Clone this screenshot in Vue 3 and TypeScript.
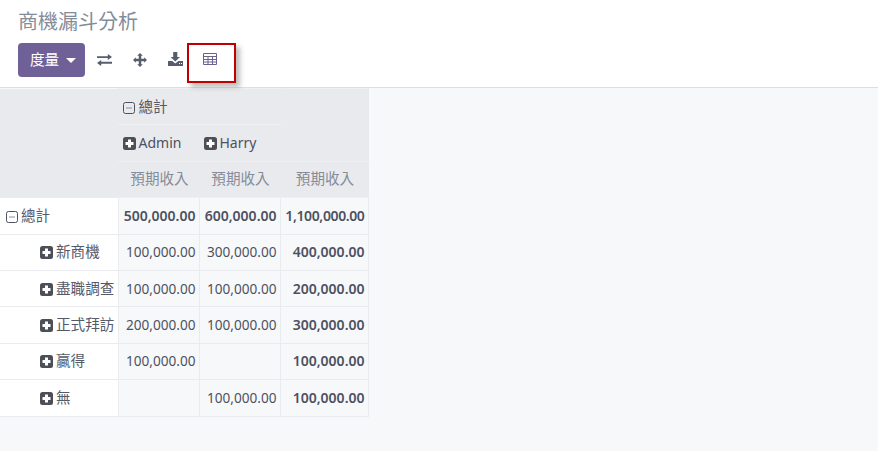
<script setup lang="ts">
interface Row { label: string; a: string; b: string; total: string }
const rows: Row[] = [
  { label: '新商機', a: '100,000.00', b: '300,000.00', total: '400,000.00' },
  { label: '盡職調查', a: '100,000.00', b: '100,000.00', total: '200,000.00' },
  { label: '正式拜訪', a: '200,000.00', b: '100,000.00', total: '300,000.00' },
  { label: '贏得', a: '100,000.00', b: '', total: '100,000.00' },
  { label: '無', a: '', b: '100,000.00', total: '100,000.00' },
]
</script>

<template>
  <div class="page">
    <header class="head">
      <h1 class="title">商機漏斗分析</h1>
      <div class="tools">
        <button class="measure">度量<span class="caret"></span></button>
        <button class="tool nudge" aria-label="flip">
          <svg width="15" height="12" viewBox="0 0 15 12"><path d="M0 2.2h10.8V0L15 3l-4.2 3V4H0zM15 7.8v1.9H4.2V12L0 9l4.2-3v1.8z" fill="#565d6e"/></svg>
        </button>
        <button class="tool nudge" aria-label="expand">
          <svg width="14" height="14" viewBox="0 0 14 14"><path d="M7 0l2.8 2.8H8.2V5.8h3V4.2L14 7l-2.8 2.8V8.2h-3v3h1.6L7 14l-2.8-2.8h1.6v-3h-3v1.6L0 7l2.8-2.8v1.6h3v-3H4.2z" fill="#565d6e"/></svg>
        </button>
        <button class="tool tool-up" aria-label="download">
          <svg width="15" height="14" viewBox="0 0 15 14"><path d="M5.2 0h4.1v5H12L7.3 9.6 2.6 5h2.6zM0 9h4.2l3.1 2.4L10.4 9H15v5H0zM11 11h1v1h-1zM13 11h1v1h-1z" fill-rule="evenodd" fill="#565d6e"/></svg>
        </button>
        <button class="tool table-tool" aria-label="table">
          <svg width="14" height="12" viewBox="0 0 14 12"><path d="M.5.5h13v11H.5zM.5 3.5h13M.5 6.5h13M.5 9h13M5 3.5v8M9.5 3.5v8" fill="none" stroke="#6a6390" stroke-width="1"/></svg>
        </button>
      </div>
      <div class="mark"></div>
    </header>

    <main class="body">
      <table class="pivot">
        <colgroup>
          <col class="c0" /><col class="c1" /><col class="c2" /><col class="c3" />
        </colgroup>
        <thead>
          <tr>
            <th class="blank" rowspan="3"></th>
            <th colspan="2" class="hd cjk">
              <svg class="ico wide" width="12" height="12" viewBox="0 0 12 12"><rect x=".5" y=".5" width="11" height="11" rx="2" fill="none" stroke="#4c5160"/><path d="M3 6h6" stroke="#8a8f9a"/></svg>總計
            </th>
            <th class="hd" rowspan="2"></th>
          </tr>
          <tr>
            <th class="hd latin">
              <svg class="ico" width="13" height="13" viewBox="0 0 13 13"><rect width="13" height="13" rx="2.5" fill="#4c4f58"/><path d="M5 2.5h3V5h2.5v3H8v2.5H5V8H2.5V5H5z" fill="#fff"/></svg>Admin
            </th>
            <th class="hd latin">
              <svg class="ico" width="13" height="13" viewBox="0 0 13 13"><rect width="13" height="13" rx="2.5" fill="#4c4f58"/><path d="M5 2.5h3V5h2.5v3H8v2.5H5V8H2.5V5H5z" fill="#fff"/></svg>Harry
            </th>
          </tr>
          <tr>
            <th class="sub cjk">預期收入</th>
            <th class="sub cjk">預期收入</th>
            <th class="sub cjk">預期收入</th>
          </tr>
        </thead>
        <tbody>
          <tr>
            <td class="lab cjk">
              <svg class="ico" width="12" height="12" viewBox="0 0 12 12"><rect x=".5" y=".5" width="11" height="11" rx="2" fill="none" stroke="#4c5160"/><path d="M3 6h6" stroke="#8a8f9a"/></svg>總計
            </td>
            <td class="num strong">500,000.00</td>
            <td class="num strong">600,000.00</td>
            <td class="num strong tight">1,100,000.00</td>
          </tr>
          <tr v-for="r in rows" :key="r.label">
            <td class="lab inner cjk">
              <svg class="ico" width="13" height="13" viewBox="0 0 13 13"><rect width="13" height="13" rx="2.5" fill="#4c4f58"/><path d="M5 2.5h3V5h2.5v3H8v2.5H5V8H2.5V5H5z" fill="#fff"/></svg>{{ r.label }}
            </td>
            <td class="num">{{ r.a }}</td>
            <td class="num">{{ r.b }}</td>
            <td class="num strong">{{ r.total }}</td>
          </tr>
        </tbody>
      </table>
    </main>
  </div>
</template>

<style>
html, body { margin: 0; padding: 0; background: #f7f8fa; }
</style>

<style scoped>
.page {
  width: 878px;
  height: 451px;
  overflow: hidden;
  background: #f7f8fa;
  font-family: "Noto Sans", "Noto Sans CJK TC", sans-serif;
  font-size: 14px;
  color: #4c5160;
}
.head {
  position: relative;
  box-sizing: border-box;
  height: 88px;
  padding: 9px 18px 0;
  background: #fff;
  border-bottom: 1px solid #dcdee3;
}
.title {
  margin: 0;
  height: 26px;
  font-size: 20px;
  line-height: 26px;
  font-weight: 400;
  color: #848c99;
}
.tools {
  display: flex;
  align-items: center;
  margin-top: 8px;
}
.measure {
  display: flex;
  align-items: center;
  box-sizing: border-box;
  width: 67px;
  height: 34px;
  padding: 0 0 3px 12px;
  border: 0;
  border-radius: 4px;
  background: #6f6198;
  color: #fff;
  font: inherit;
  font-size: 14.6px;
}
.caret {
  margin-left: 7px;
  margin-top: 3px;
  border-left: 5px solid transparent;
  border-right: 5px solid transparent;
  border-top: 5px solid #fff;
}
.tool {
  display: flex;
  align-items: center;
  justify-content: center;
  width: 36px;
  height: 34px;
  padding: 0;
  border: 0;
  background: none;
}
.tool svg { display: block; }
.nudge { padding-left: 2px; }
.tool-up { margin-top: -2px; }
.table-tool { margin-top: -3px; margin-left: -1px; }
.mark {
  position: absolute;
  left: 187px;
  top: 43px;
  box-sizing: border-box;
  width: 49px;
  height: 40px;
  border: 2px solid #c00000;
  box-shadow: 4px 4px 5px rgba(90, 90, 80, 0.4);
}
.body { display: block; }
.pivot {
  width: 368px;
  table-layout: fixed;
  border-collapse: collapse;
}
.c0 { width: 118px; }
.c1, .c2 { width: 81px; }
.c3 { width: 88px; }
th, td {
  box-sizing: border-box;
  padding: 0 3px 0 4px;
  height: 36.4px;
  white-space: nowrap;
  font-weight: 400;
  text-align: left;
  border: 1px solid #e9ebef;
}
thead th {
  background: #e9eaee;
  border-color: #eef0f3;
  border-left-color: #e9eaee;
  border-right-color: #e9eaee;
}
.blank { border: 0; }
.cjk { font-size: 14.6px; padding-bottom: 3px; color: #555a68; }
.latin { padding-bottom: 2px; }
.sub {
  color: #858c99;
  text-align: center;
  padding-left: 2px;
  padding-right: 0;
}
.ico {
  vertical-align: -2px;
  margin-right: 3px;
}
.wide { margin-right: 4px; }
.lab {
  background: #fff;
  padding-left: 6px;
  border-left: 0;
}
.inner { padding-left: 40px; }
.num {
  text-align: right;
  background: #f7f8fa;
  font-size: 13.6px;
  padding-bottom: 1px;
}
.strong {
  font-weight: 600;
  font-size: 14px;
  color: #4c5160;
}
.tight { letter-spacing: -0.38px; }
</style>
